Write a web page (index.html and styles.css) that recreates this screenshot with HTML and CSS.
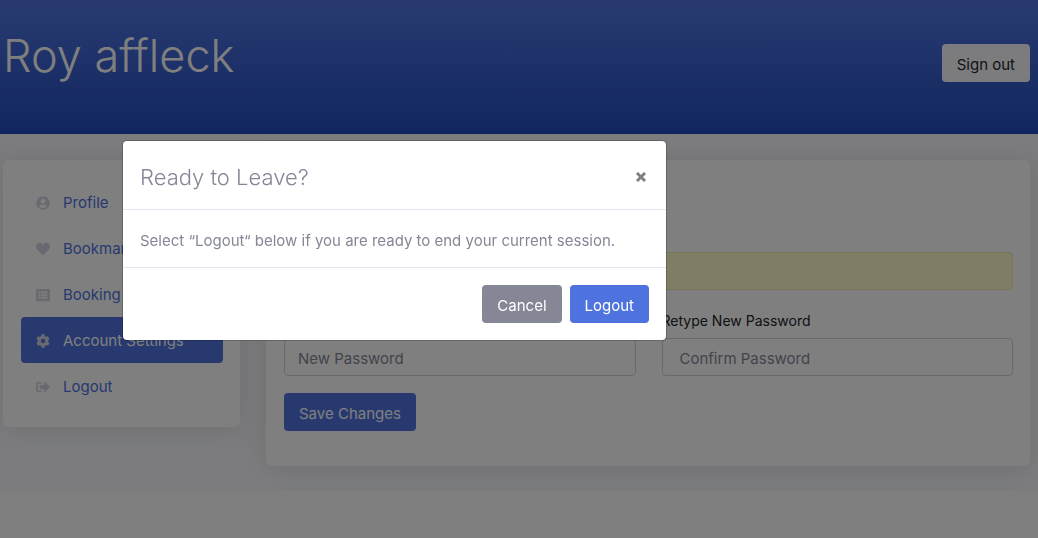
FILE: index.html
```html
<!DOCTYPE html>
<html lang="en">
<head>
<meta charset="utf-8">
<meta name="viewport" content="width=device-width, initial-scale=1">
<title>Account Settings</title>
<link rel="stylesheet" href="styles.css">
</head>
<body>
<header class="banner">
  <h1 class="banner-name">Roy affleck</h1>
  <button class="btn btn-light" type="button">Sign out</button>
</header>
<main class="content">
  <nav class="card side-nav" aria-label="Account">
    <a class="nav-item" href="#profile">
      <svg class="nav-icon" viewBox="0 0 496 512"><path fill-rule="evenodd" d="M248 8a248 248 0 1 0 0 496a248 248 0 1 0 0-496zM248 104a88 88 0 1 1 0 176a88 88 0 1 1 0-176zM248 448c-59 0-111-27-147-69c19-35 56-59 99-59c5 0 16 8 48 8s43-8 48-8c43 0 80 24 99 59c-36 42-88 69-147 69z"/></svg>
      <span>Profile</span>
    </a>
    <a class="nav-item" href="#bookmark">
      <svg class="nav-icon" viewBox="0 0 512 512"><path d="M462 62c-55-46-136-38-186 13l-20 21l-20-21C186 24 105 16 50 62c-63 54-66 150-10 208l193 200c13 13 33 13 46 0l193-200c56-58 53-154-10-208z"/></svg>
      <span>Bookmark</span>
    </a>
    <a class="nav-item" href="#booking">
      <svg class="nav-icon" viewBox="0 0 512 512"><path fill-rule="evenodd" d="M48 32h416a48 48 0 0 1 48 48v352a48 48 0 0 1-48 48H48a48 48 0 0 1-48-48V80a48 48 0 0 1 48-48zM128 120a40 40 0 1 0 0 80a40 40 0 1 0 0-80zM128 216a40 40 0 1 0 0 80a40 40 0 1 0 0-80zM128 312a40 40 0 1 0 0 80a40 40 0 1 0 0-80zM204 128h200q12 0 12 12v40q0 12-12 12H204q-12 0-12-12v-40q0-12 12-12zM204 228h200q12 0 12 12v32q0 12-12 12H204q-12 0-12-12v-32q0-12 12-12zM204 320h200q12 0 12 12v40q0 12-12 12H204q-12 0-12-12v-40q0-12 12-12z"/></svg>
      <span>Booking</span>
    </a>
    <a class="nav-item active" href="#settings" aria-current="page">
      <svg class="nav-icon" viewBox="0 0 512 512"><path fill-rule="evenodd" d="M487 316l-42-25c4-23 4-47 0-70l42-25c5-3 7-9 6-14c-11-36-30-68-55-95c-4-4-10-5-15-2l-42 24c-18-15-39-27-61-35V25c0-6-4-11-10-12c-36-8-74-8-109 0c-6 1-10 6-10 12v49c-22 8-43 20-61 35L88 85c-5-3-11-2-15 2c-25 27-44 59-55 95c-1 5 1 11 6 14l42 25c-4 23-4 47 0 70l-42 25c-5 3-7 9-6 14c11 36 30 68 55 95c4 4 10 5 15 2l42-24c18 15 39 27 61 35v49c0 6 4 11 10 12c36 8 74 8 109 0c6-1 10-6 10-12v-49c22-8 43-20 61-35l42 24c5 3 11 2 15-2c25-27 44-59 55-95c1-5-1-11-6-14zM256 176a80 80 0 1 1 0 160a80 80 0 1 1 0-160z"/></svg>
      <span>Account Settings</span>
    </a>
    <a class="nav-item" href="#logout">
      <svg class="nav-icon" viewBox="0 0 512 512"><path d="M497 273L329 441c-15 15-41 4-41-17v-96H152c-13 0-24-11-24-24v-96c0-13 11-24 24-24h136V88c0-21 26-32 41-17l168 168c9 9 9 25 0 34zM192 436v-40c0-7-5-12-12-12H96c-18 0-32-14-32-32V160c0-18 14-32 32-32h84c7 0 12-5 12-12V76c0-7-5-12-12-12H96C43 64 0 107 0 160v192c0 53 43 96 96 96h84c7 0 12-5 12-12z"/></svg>
      <span>Logout</span>
    </a>
  </nav>
  <form class="card settings">
    <input class="input autofilled" type="password" aria-label="Current Password">
    <div class="field-row">
      <div class="field">
        <label for="new">New Password</label>
        <input class="input" id="new" type="password" placeholder="New Password">
      </div>
      <div class="field">
        <label for="confirm">Retype New Password</label>
        <input class="input input-wide" id="confirm" type="password" placeholder="Confirm Password">
      </div>
    </div>
    <button class="btn btn-primary" type="button">Save Changes</button>
  </form>
</main>
<div class="backdrop">
  <section class="modal" role="dialog" aria-modal="true" aria-labelledby="modal-title">
    <div class="modal-header">
      <h2 class="modal-title" id="modal-title">Ready to Leave?</h2>
      <button class="close" type="button" aria-label="Close">
        <svg class="close-icon" viewBox="0 0 10 10"><path d="M2 2L8 8M8 2L2 8"/></svg>
      </button>
    </div>
    <p class="modal-body">Select “Logout“ below if you are ready to end your current session.</p>
    <div class="modal-footer">
      <button class="btn btn-secondary" type="button">Cancel</button>
      <button class="btn btn-primary" type="button">Logout</button>
    </div>
  </section>
</div>
</body>
</html>
```
FILE: styles.css
```css
* {
  box-sizing: border-box;
}

body {
  margin: 0;
  background: #fff;
  color: #212529;
  font-family: Inter, "Open Sans", sans-serif;
  font-size: 15px;
  line-height: 24px;
}

.banner {
  display: flex;
  justify-content: space-between;
  align-items: flex-start;
  padding: 28px 8px 50px 3px;
  background: linear-gradient(180deg, #4e73df 10%, #224abe 100%);
}

.banner-name {
  margin: 0;
  color: #fff;
  font-size: 45px;
  font-weight: 300;
  line-height: 56px;
}

.banner .btn {
  margin-top: 16px;
}

.btn {
  height: 38px;
  padding: 4px 15px 0;
  border: 0;
  border-radius: 4px;
  font: inherit;
  color: #fff;
  cursor: pointer;
}

.btn-light {
  background: #f8f9fc;
  color: #212529;
}

.btn-primary {
  background: #4e73df;
}

.btn-secondary {
  background: #858796;
}

.content {
  display: grid;
  grid-template-columns: 237px 1fr;
  align-items: start;
  gap: 26px;
  padding: 26px 8px 25px 3px;
  background: #f8f9fc;
  overflow: hidden;
}

.card {
  background: #fff;
  border-radius: 6px;
  box-shadow: 0 2px 28px rgba(58, 59, 69, 0.15);
}

.side-nav {
  padding: 19px 17px 18px 18px;
}

.nav-item {
  display: flex;
  align-items: center;
  gap: 13px;
  height: 46px;
  padding: 2px 15px 0;
  border-radius: 4px;
  color: #4e73df;
  text-decoration: none;
}

.nav-icon {
  width: 14px;
  height: 14px;
  fill: #d1d3e2;
}

.nav-item.active {
  background: #4e73df;
  color: #fff;
}

.settings {
  padding: 92px 17px 35px 18px;
}

.field {
  display: flex;
  flex-direction: column;
  gap: 3px;
  margin-bottom: 17px;
  font-size: 14px;
}

.field-row {
  display: grid;
  grid-template-columns: 1fr 1fr;
  gap: 26px;
}

.field label {
  line-height: 28px;
}

.input {
  width: 100%;
  height: 38px;
  padding: 3px 13px 0;
  border: 1px solid #d1d3e2;
  border-radius: 4px;
  background: #fff;
  font: inherit;
  font-size: 15px;
}

.input::placeholder {
  color: #858796;
  opacity: 1;
}

.input-wide {
  padding-left: 17px;
}

.autofilled {
  display: block;
  margin-bottom: 17px;
  background: #fffbc8;
  border-color: #efe8b4;
}

.backdrop {
  position: fixed;
  inset: 0;
  padding: 140px 16px 16px 122px;
  background: rgba(0, 0, 0, 0.5);
}

.modal {
  max-width: 545px;
  border: 1px solid rgba(0, 0, 0, 0.2);
  border-radius: 5px;
  background: #fff;
  background-clip: padding-box;
  color: #858796;
}

.modal-header {
  display: flex;
  justify-content: space-between;
  align-items: center;
  padding: 19px 17px 15px;
  border-bottom: 1px solid #e3e6f0;
}

.modal-title {
  margin: 0;
  font-size: 22px;
  font-weight: 300;
  line-height: 34px;
}

.close {
  display: flex;
  padding: 3px;
  border: 0;
  background: none;
  cursor: pointer;
}

.close-icon {
  width: 10px;
  height: 10px;
  fill: none;
  stroke: #808080;
  stroke-width: 3;
  stroke-linecap: square;
}

.modal-body {
  margin: 0;
  padding: 19px 17px 14px;
  border-bottom: 1px solid #e3e6f0;
}

.modal-footer {
  display: flex;
  justify-content: flex-end;
  gap: 8px;
  padding: 17px;
}
```
